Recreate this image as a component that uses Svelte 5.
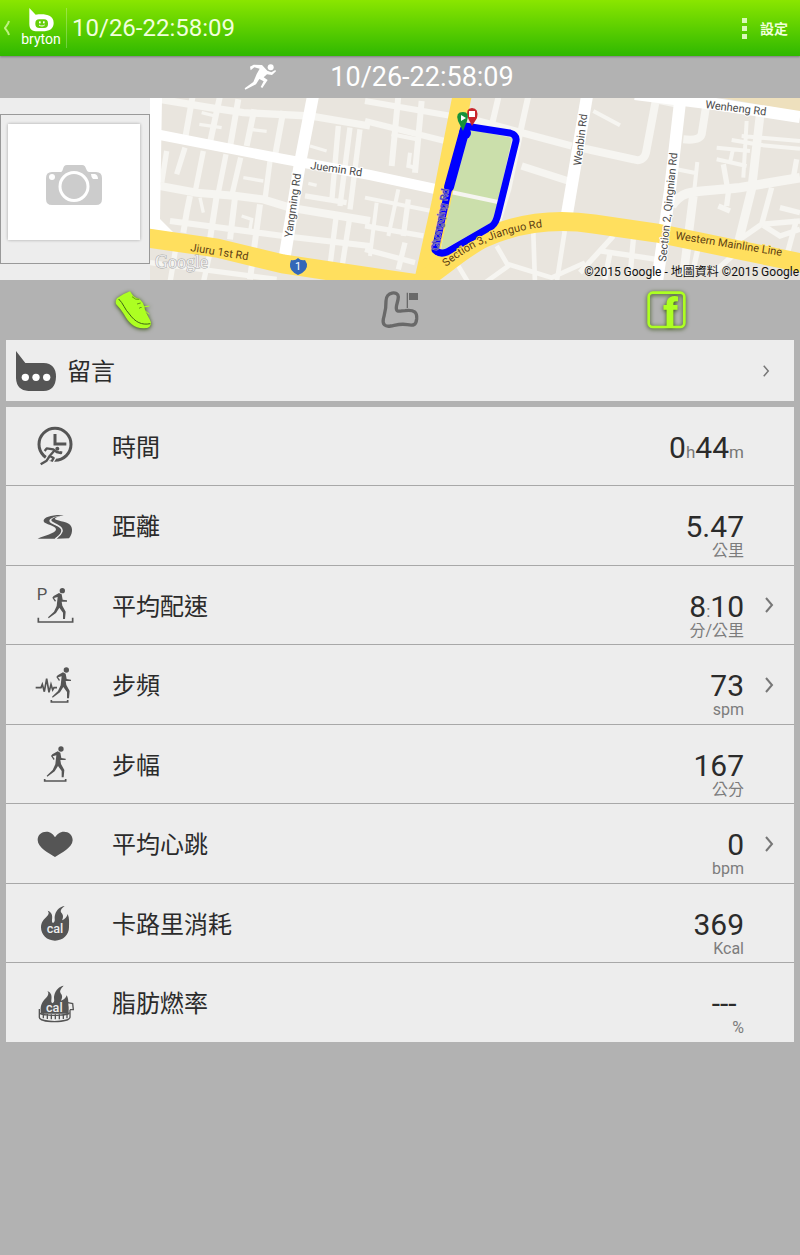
<script>
  const startedAt = '10/26-22:58:09';

  const metrics = [
    { icon: 'time', label: '時間', parts: ['0', 'h', '44', 'm'], unit: '' },
    { icon: 'road', label: '距離', parts: ['5.47'], unit: '公里' },
    { icon: 'pace', label: '平均配速', parts: ['8', ':', '10'], unit: '分/公里', more: true },
    { icon: 'cadence', label: '步頻', parts: ['73'], unit: 'spm', more: true },
    { icon: 'stride', label: '步幅', parts: ['167'], unit: '公分' },
    { icon: 'heart', label: '平均心跳', parts: ['0'], unit: 'bpm', more: true },
    { icon: 'calories', label: '卡路里消耗', parts: ['369'], unit: 'Kcal' },
    { icon: 'fat', label: '脂肪燃率', parts: ['---\u00a0'], unit: '%' }
  ];

  const dash = 'M29 75 L35 67 L55 70 L65 78 L78 81 L79 76 M57 75 L44 90 L56 96 L50 106 M44 90 L35 104 L17 115';
</script>

{#snippet runner(x, y)}
  <g transform="translate({x} {y})">
    <circle cx="82" cy="17" r="8" fill="#555" />
    <path d="M72 24 L80 28 L83 44 L96 46 L96 50 L80 50 L82 62 L92 80 L90 102 L84 102 L84 83 L73 68 L63 84 L41 100 L39 97 L57 80 L65 63 L68 36 L57 39 L63 47 L60 50 L52 38 L56 33 Z" fill="#555" />
  </g>
{/snippet}

{#snippet icon(name)}
  <svg class="icon" viewBox="0 0 120 120" aria-hidden="true">
    {#if name === 'time'}
      <circle cx="60" cy="55" r="48" fill="none" stroke="#555" stroke-width="9" />
      <path d="M60 24 V54 H94" fill="none" stroke="#555" stroke-width="9" />
      <path d={dash} fill="none" stroke="#ededed" stroke-width="15" stroke-linejoin="round" />
      <circle cx="66" cy="69" r="9" fill="#ededed" />
      <path d={dash} fill="none" stroke="#555" stroke-width="7" stroke-linejoin="round" />
      <circle cx="67" cy="68" r="6" fill="#555" />
    {:else if name === 'road'}
      <path d="M86 27 C56 25 23 32 26 46 C28 56 64 58 63 71 C61 82 27 88 8 98 L59 98 C67 92 79 84 79 73 C78 59 44 56 43 45 C43 35 66 30 86 27 Z" fill="#555" />
      <path d="M89 27 C65 31 49 36 49 43 C49 50 82 57 83 71 C84 82 72 92 65 98 L102 97 C112 85 115 66 105 56 C94 45 60 44 60 38 C61 32 79 30 89 27 Z" fill="#555" />
      <path d="M46 42 C46 54 80 58 81 73 C82 84 69 92 61 99" fill="none" stroke="#ededed" stroke-width="3" stroke-dasharray="7 5" />
    {:else if name === 'pace'}
      <text x="5" y="45" class="p">P</text>
      {@render runner(0, 0)}
      <path d="M10 98 V111 H113 V98" fill="none" stroke="#555" stroke-width="5" />
    {:else if name === 'cadence'}
      <path d="M2 68 H18 L22 58 L28 80 L35 41 L42 82 L48 58 L53 75 L57 68 H66" fill="none" stroke="#555" stroke-width="5" />
      {@render runner(12, -2)}
      <path d="M49 105 V111 H98 V105" fill="none" stroke="#555" stroke-width="5" />
    {:else if name === 'stride'}
      {@render runner(-4, -2)}
      <path d="M29 105 V111 H92 V105" fill="none" stroke="#555" stroke-width="5" />
    {:else if name === 'heart'}
      <path d="M60 99 C42 88 8 71 8 48 C8 32 20 23 34 23 C47 23 55 31 60 40 C66 31 74 23 87 23 C101 23 113 33 113 49 C112 71 78 88 60 99 Z" fill="#555" />
    {:else if name === 'calories'}
      <path d="M60 113 C36 113 18 96 18 73 C18 58 26 50 34 42 C42 34 43 29 38 23 C51 27 53 38 51 50 C50 58 53 62 57 58 C62 52 57 46 60 36 C64 20 75 11 89 9 C78 17 75 24 79 29 C83 33 87 40 81 52 C90 48 96 42 98 33 C104 45 102 60 102 73 C102 96 84 113 60 113 Z" fill="#555" />
      <text x="60" y="89" class="burn">cal</text>
    {:else}
      <path d="M13 78 V103 C16 120 101 120 105 103 V80 M98 59 L113 62 L115 80 L105 80" fill="none" stroke="#555" stroke-width="4" />
      <path d="M25 91 V106 M37 93 V108 M49 94 V109 M61 94 V109 M73 94 V109 M85 93 V108 M96 91 V106" stroke="#555" stroke-width="4" />
      <path d="M14 86 C16 98 101 98 104 86 V92 C101 101 16 101 14 92 Z" fill="#555" />
      <path d="M18 92 C14 68 22 56 32 46 C41 37 42 30 37 24 C50 29 51 40 49 52 C48 60 52 63 56 58 C60 52 55 46 58 36 C62 20 73 10 86 8 C76 17 73 25 77 31 C81 36 84 42 78 53 C87 50 93 45 95 37 C102 49 99 61 101 72 L101 92 Z" fill="#555" />
      <text x="58" y="87" class="burn">cal</text>
    {/if}
  </svg>
{/snippet}

{#snippet chevron()}
  <svg class="chevron" viewBox="0 0 10 16" aria-hidden="true"><path d="M2 1 L8 8 L2 15" /></svg>
{/snippet}

<div class="app">
  <header class="bar">
    <button class="home" aria-label="Bryton">
      <svg class="back" viewBox="0 0 8 16" aria-hidden="true"><path d="M6 1 C5 5 3 6 2 8 C3 10 5 11 6 15" /></svg>
      <svg class="logo" viewBox="0 0 120 120" aria-hidden="true">
        <path d="M25 0 L44 20 C68 17 98 18 98 45 C98 63 84 70 65 70 H50 C34 70 25 64 25 48 Z" fill="#fff" />
        <rect x="43" y="34" width="38" height="26" rx="12" fill="#66cf09" />
        <rect x="54" y="40" width="5" height="6" fill="#fff" /><rect x="66" y="40" width="5" height="6" fill="#fff" />
        <path d="M54 51 C60 55 66 55 71 51" fill="none" stroke="#fff" stroke-width="3" />
        <text x="60" y="109" class="wordmark">bryton</text>
      </svg>
    </button>
    <h1>{startedAt}</h1>
    <button class="settings">
      <span class="dots" aria-hidden="true"><i></i><i></i><i></i></span>
      設定
    </button>
  </header>

  <section class="activity">
    <svg class="sprinter" viewBox="0 0 96 78" aria-hidden="true">
      <circle cx="80" cy="10" r="9" fill="#fff" />
      <path d="M18 8 L29 2 L54 3 L70 20 L82 25 L94 18 L96 22 L84 33 L69 31 L59 40 L71 48 L61 63 L55 72 L50 69 L59 52 L46 45 L36 61 L4 77 L2 73 L28 54 L38 30 L47 14 L31 10 L20 19 Z" fill="#fff" />
    </svg>
    <h2>{startedAt}</h2>
  </section>

  <div class="media">
    <div class="photo-pane">
      <button class="photo" aria-label="新增相片">
        <span class="frame">
          <svg viewBox="0 0 56 40" aria-hidden="true">
            <path d="M15 7 C18 6 16 0 21 0 H36 C41 0 39 6 43 7 H50 Q56 7 56 13 V34 Q56 40 50 40 H6 Q0 40 0 34 V13 Q0 7 6 7 Z" fill="#ccc" />
            <circle cx="28" cy="21.500" r="14" fill="#ccc" stroke="#fff" stroke-width="3" />
            <circle cx="6" cy="12" r="3" fill="#fff" />
            <path d="M45 9 H49 Q52 10 52 14 H47 Q45 12 45 9 Z" fill="#fff" />
          </svg>
        </span>
      </button>
    </div>

    <svg class="map" viewBox="150 98 650 182" preserveAspectRatio="xMidYMid slice" role="img" aria-label="路線地圖">
      <rect x="0" y="98" width="1600" height="182" fill="#e9e5de" />
      <g fill="none" stroke="#f6f5f1" stroke-width="18">
        <g transform="translate(150 96) scale(.3333)">
          <path d="M30 10 L180 35 L280 50 L480 60 L660 90" stroke-width="22" />
          <path d="M128 0 L105 130 M210 0 L180 140 M265 10 L238 165 M400 45 L375 180 M313 40 L290 150" />
          <path d="M155 50 L195 60 M148 85 L215 95 M300 100 L350 106 M480 150 L530 165 M475 262 L500 268" stroke-width="10" />
          <path d="M30 270 L140 290 L260 300 L340 310 L420 335 L660 375" stroke-width="24" />
          <path d="M50 165 L35 260 M105 155 L80 235 M160 165 L135 290 M228 175 L205 290 M272 185 L245 300 M360 195 L345 310" stroke-width="16" />
          <path d="M120 300 L110 350 L100 410 M200 300 L180 430 M255 305 L240 430 M330 325 L300 550 M60 375 L400 420 L660 450" />
          <path d="M150 305 L160 350 M275 360 L305 370 L300 400 M280 245 L340 255" stroke-width="10" />
          <path d="M565 90 L545 320 M600 95 L570 330 M630 100 L600 340 M560 350 L540 510 M600 360 L575 520 M465 300 L590 320" stroke-width="16" />
          <path d="M80 440 L60 560 M180 470 L160 560 M0 500 L380 550" stroke-width="16" />
        </g>
        <g transform="translate(365 96) scale(.3333)">
          <path d="M0 15 L260 60 M0 75 L240 135 M100 0 L80 210 M170 15 L150 230 M400 5 L380 90 M490 0 L470 90 L430 280 L400 375" />
          <path d="M320 70 L620 150 M470 210 L610 255" stroke-width="22" />
          <path d="M80 115 L155 130 M135 170 L130 210 L150 215 M0 305 L200 345 M100 280 L70 420 M35 320 L15 480" stroke-width="12" />
          <path d="M0 390 L175 420 M130 310 L115 420 M120 440 L100 520 M0 460 L150 500" stroke-width="16" />
          <path d="M505 410 L510 560 M600 400 L575 560 M395 450 L430 510 L360 560 M430 505 L560 545 L660 500 M280 510 L310 560" stroke-width="14" />
        </g>
        <g transform="translate(580 96) scale(.3333)">
          <path d="M0 155 L160 190 Q190 200 198 170 L228 10 L300 25 M380 20 L365 115 Q360 135 310 130" stroke-width="24" />
          <path d="M40 45 L120 88 M290 220 L350 232 M352 198 L340 310" stroke-width="12" />
          <path d="M275 330 C310 275 350 290 480 275 L660 245" stroke-width="28" />
          <path d="M540 60 L515 280 L475 440 M340 300 L310 540" stroke-width="26" />
          <path d="M455 132 L530 145 M485 120 L660 135 M520 145 L660 158 M410 155 L510 165 M410 190 L500 210 M500 75 L490 245 M460 155 L450 200" stroke-width="12" />
          <path d="M430 205 L445 290 L440 330 M415 330 L450 345 M575 275 L545 385 L660 375 M650 190 L640 245 M650 370 L620 480 M480 430 L545 385 L600 420 L660 400 M600 335 L660 350" stroke-width="16" />
          <path d="M100 420 L0 530 M60 465 L230 490 M160 430 L150 540 M90 470 L75 550 M360 430 L340 520 M480 460 L400 530 M560 490 L660 510" stroke-width="16" />
        </g>
      </g>

      <path d="M712 96 H800 V112 Z" fill="#eee0bd" />
      <g fill="none" stroke="#fff">
        <path d="M149 98 H162 L160 219 L174 233 L150 229 Z" fill="#fff" stroke="none" />
        <path d="M155 134 L283 159 L370 175 L440 190" stroke-width="10" />
        <path d="M313 96 L300 163 L285 255" stroke-width="12" />
        <path d="M587 96 L567 214" stroke-width="12" />
        <path d="M680 102 L670 190 L657 282" stroke-width="12" />
        <path d="M635 94 L715 104 L800 117" stroke-width="12" />
      </g>

      <path d="M469 129 L512 138 L494 221 L441 251 L450 190 Z" fill="#cbdfab" />
      <path d="M446 191 L498 202" stroke="#f6f5f1" stroke-width="4" />

      <g fill="none" stroke="#ffdf5e" stroke-width="19">
        <path d="M148 238 L217 248 L283 264 L370 277 L425 285" />
        <path d="M462 96 L441 203 L423 284" />
        <path d="M418 284 C447 264 462 249 484 238 C518 223 554 218 594 224 L657 233 L802 263" />
      </g>

      <path d="M465 126 L510 133 Q517 135 516 141 L498 214 Q496 223 492 226 L447 252 Q440 255 435 250 L449 187 Z" fill="none" stroke="#00f" stroke-width="7" stroke-linejoin="round" />
      <path d="M465 129 L449 187" stroke="#00f" stroke-width="10" stroke-linecap="round" />
      <circle cx="465" cy="133" r="6" fill="#00f" />

      <path d="M472 126 L468 118 Q465 108 472 108 Q479 108 477 118 Z" fill="#c8252b" /><rect x="469" y="111" width="6" height="6" fill="#fff" />
      <path d="M463 131 L458 121 Q455 112 463 112 Q470 112 467 121 Z" fill="#16923a" /><path d="M461 115 V121 L466 118 Z" fill="#fff" />

      <g class="roads">
        <text transform="translate(310 169) rotate(8)">Juemin Rd</text>
        <text transform="translate(292 238) rotate(-82)">Yangming Rd</text>
        <text transform="translate(190 251) rotate(9)" class="main">Jiuru 1st Rd</text>
        <text transform="translate(438 251) rotate(-80)" class="covered">Chongqing Rd</text>
        <path id="jianguo" d="M446 267 C470 247 496 235 536 228 L560 225" fill="none" />
        <text class="main"><textPath href="#jianguo">Section 3, Jianguo Rd</textPath></text>
        <text transform="translate(581 166) rotate(-83)">Wenbin Rd</text>
        <text transform="translate(666 262) rotate(-84)">Section 2, Qingnian Rd</text>
        <text transform="translate(705 108) rotate(7)">Wenheng Rd</text>
        <text transform="translate(675 239) rotate(9)" class="main">Western Mainline Line</text>
      </g>
      <path d="M291 260 Q295 261 298 258 Q301 261 305 260 L307 264 Q308 271 298 275 Q289 271 290 264 Z" fill="#3467b8" />
      <text x="298" y="270" class="shield">1</text>
      <text x="155" y="268" class="google">Google</text>
      <text x="799" y="276" class="credit">©2015 Google - 地圖資料 ©2015 Google</text>
    </svg>
  </div>

  <nav class="tabs">
    <button aria-label="運動摘要">
      <svg class="lit" viewBox="0 0 120 120" aria-hidden="true">
        <path d="M51 4 Q29 12 13 24 Q6 30 9 42 Q21 54 33 73 C47 98 62 115 91 115 Q114 116 114 99 C112 84 97 72 94 50 Q91 37 79 26 Q64 25 57 13 Z" fill="#adff22" />
        <path d="M17 27 C31 40 35 58 49 72 C67 97 86 106 112 101" fill="none" stroke="#3d6514" stroke-width="3" />
        <path d="M57 20 Q68 31 79 28 M72 42 L83 39 M78 55 L88 50" fill="none" stroke="#3d6514" stroke-width="2" />
        <path d="M79 49 Q95 52 109 48 M83 62 Q99 60 109 73" fill="none" stroke="#adff22" stroke-width="3" />
      </svg>
    </button>
    <button aria-label="路線">
      <svg viewBox="0 0 120 120" aria-hidden="true">
        <path d="M18 33 C17 5 55 2 55 20 C55 33 49 43 49 52 C48 68 58 63 75 62 C103 59 112 66 110 87 C108 104 102 108 82 104 C62 100 49 105 32 108 C15 111 7 103 10 87 C13 73 19 58 18 33 Z" fill="none" stroke="#696969" stroke-width="10" />
        <path d="M82 54 V8" stroke="#696969" stroke-width="4" /><path d="M87 9 H114 V30 H87 Z" fill="#696969" />
      </svg>
    </button>
    <button aria-label="Facebook">
      <svg class="lit" viewBox="0 0 120 120" aria-hidden="true">
        <rect x="5" y="8" width="107" height="103" rx="12" fill="none" stroke="#adff22" stroke-width="8" />
        <text x="49" y="111" class="fb">f</text>
      </svg>
    </button>
  </nav>

  <main>
    <button class="comments">
      <svg class="bubble" viewBox="0 0 120 120" aria-hidden="true">
        <path d="M0 0 L28 36 H83 Q120 38 120 77 Q119 118 83 120 H37 Q2 118 0 82 Z" fill="#555" />
        <circle cx="28" cy="79" r="11" fill="#fff" /><circle cx="60" cy="79" r="11" fill="#fff" /><circle cx="92" cy="79" r="11" fill="#fff" />
      </svg>
      <span class="label">留言</span>
      {@render chevron()}
    </button>

    <ul>
      {#each metrics as m}
        <li>
          <svelte:element this={m.more ? 'button' : 'div'} class="row">
            {@render icon(m.icon)}
            <span class="label">{m.label}</span>
            <span class="reading">
              <span class="value">{#each m.parts as part, i}<span class:minor={i % 2 === 1}>{part}</span>{/each}</span>
              <span class="unit">{m.unit}</span>
            </span>
            <span class="more">{#if m.more}{@render chevron()}{/if}</span>
          </svelte:element>
        </li>
      {/each}
    </ul>
  </main>
</div>

<style>
  :global(body) {
    margin: 0;
    background: #b2b2b2;
  }

  .app {
    min-height: 100vh;
    background: #b2b2b2;
    color: #2b2b2b;
    font-family: Roboto, 'Noto Sans CJK TC', sans-serif;
  }

  button {
    margin: 0;
    padding: 0;
    border: 0;
    background: none;
    color: inherit;
    font: inherit;
    text-align: left;
    cursor: pointer;
  }

  svg {
    display: block;
    flex: none;
  }

  h1,
  h2 {
    margin: 0;
    font-weight: 400;
  }

  .bar {
    display: flex;
    align-items: center;
    height: 56px;
    background: linear-gradient(#8ae600, #2fb800);
    box-shadow: 0 1px 2px rgba(0, 0, 0, 0.3);
    color: #f1ffdc;
  }

  .home {
    display: flex;
    align-items: center;
    gap: 9px;
    height: 40px;
    padding: 0 4px 0 3px;
    border-right: 1px solid rgba(255, 255, 255, 0.25);
  }

  .back {
    width: 8px;
    height: 16px;
    fill: none;
    stroke: #bdf27f;
    stroke-width: 2;
  }

  .logo {
    width: 42px;
    height: 40px;
    overflow: visible;
  }

  .wordmark {
    fill: #fff;
    font-size: 42px;
    text-anchor: middle;
  }

  h1 {
    flex: 1;
    margin-left: 5px;
    font-size: 24px;
    line-height: 32px;
  }

  .settings {
    display: flex;
    align-items: center;
    gap: 13px;
    padding-right: 12px;
    font-size: 14px;
    font-weight: 700;
  }

  .dots {
    display: grid;
    gap: 3px;
  }

  .dots i {
    width: 5px;
    height: 5px;
    background: #d9f9b8;
  }

  .activity {
    display: flex;
    align-items: center;
    justify-content: center;
    gap: 54px;
    height: 42px;
    padding-right: 42px;
    color: #fff;
  }

  .sprinter {
    width: 32px;
    height: 26px;
  }

  h2 {
    font-size: 27px;
    line-height: 40px;
  }

  .media {
    display: grid;
    grid-template-columns: 150px 1fr;
    height: 182px;
  }

  .photo-pane {
    display: grid;
    align-items: center;
    background: #ededed;
  }

  .photo {
    box-sizing: border-box;
    height: 150px;
    padding: 8px 9px 8px 7px;
    border: 1px solid #999;
  }

  .frame {
    display: grid;
    place-items: center;
    height: 116px;
    margin-bottom: 14px;
    background: #fff;
    box-shadow: 0 0 3px rgba(0, 0, 0, 0.3);
  }

  .frame svg {
    width: 56px;
    height: 40px;
    margin-top: 6px;
  }

  .map {
    width: 100%;
    height: 182px;
  }

  .roads {
    fill: #4b4b4b;
    stroke: #fff;
    stroke-width: 2px;
    paint-order: stroke;
    font-size: 11px;
  }

  .roads path {
    stroke: none;
  }

  .roads .main {
    fill: #5d3d12;
    stroke: #ffdf5e;
  }

  .roads .covered {
    fill: #4a3fb0;
    stroke: #9a8cc0;
    stroke-width: 1px;
    font-size: 10px;
  }

  .shield {
    fill: #fff;
    font-size: 11px;
    text-anchor: middle;
  }

  .google {
    fill: #efefef;
    stroke: #aaa;
    stroke-width: 1px;
    paint-order: stroke;
    font-family: 'Liberation Serif', serif;
    font-size: 18px;
  }

  .credit {
    fill: #111;
    font-size: 12px;
    text-anchor: end;
  }

  .tabs {
    display: grid;
    grid-template-columns: repeat(3, 1fr);
    height: 60px;
  }

  .tabs button {
    display: grid;
    place-items: center;
  }

  .tabs svg {
    width: 40px;
    height: 40px;
    overflow: visible;
  }

  .lit {
    filter: drop-shadow(0 1px 2px #314d0b);
  }

  .fb {
    fill: #adff22;
    font-size: 122px;
    font-weight: 900;
  }

  main {
    display: grid;
    gap: 6px;
    padding: 0 6px;
  }

  .comments {
    display: flex;
    align-items: center;
    gap: 11px;
    height: 61px;
    padding: 0 23px 0 10px;
    background: #ededed;
  }

  .bubble {
    width: 40px;
    height: 40px;
  }

  .label {
    flex: 1;
    padding-top: 3px;
    font-size: 24px;
    line-height: 32px;
  }

  .chevron {
    width: 10px;
    height: 16px;
    fill: none;
    stroke: #777;
    stroke-width: 2;
  }

  .comments .chevron {
    height: 12px;
  }

  ul {
    margin: 0;
    padding: 0;
    background: #ededed;
    list-style: none;
  }

  li {
    box-sizing: border-box;
    height: 79px;
    border-bottom: 1px solid #a8a8a8;
  }

  li:nth-child(even) {
    height: 80px;
  }

  li:last-child {
    height: 79px;
    border: 0;
  }

  .row {
    box-sizing: border-box;
    display: flex;
    align-items: center;
    width: 100%;
    height: 100%;
    padding: 0 20px 0 29px;
  }

  .icon {
    width: 40px;
    height: 40px;
    margin-right: 37px;
    overflow: visible;
  }

  .p {
    fill: #555;
    font-size: 50px;
  }

  .burn {
    fill: #ededed;
    font-size: 38px;
    font-weight: 500;
    text-anchor: middle;
  }

  .reading {
    display: grid;
    grid-template-rows: 32px 16px;
    align-self: start;
    margin-top: 25px;
    text-align: right;
  }

  .value {
    font-size: 30px;
    line-height: 32px;
  }

  .minor {
    color: #777;
    font-size: 17px;
  }

  .unit {
    color: #7c7c7c;
    font-size: 16px;
    line-height: 16px;
  }

  .more {
    width: 10px;
    margin-left: 20px;
  }
</style>
